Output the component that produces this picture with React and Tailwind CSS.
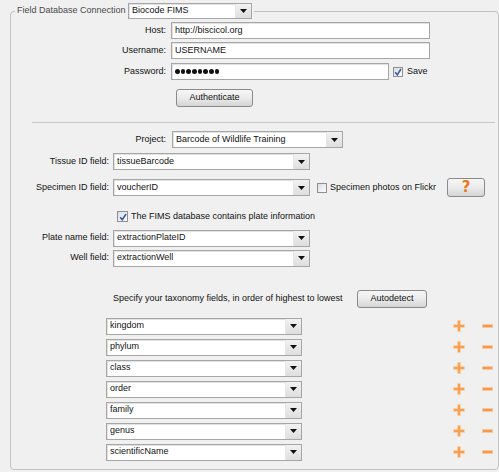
const TAXONOMY = ['kingdom', 'phylum', 'class', 'order', 'family', 'genus', 'scientificName']

function Arrow() {
  return (
    <svg width="7" height="4" viewBox="0 0 7 4">
      <polygon points="0,0 7,0 3.5,4" fill="#111" />
    </svg>
  )
}

function Combo({ value, className = '', h = 'h-[17px]' }) {
  return (
    <div className={`flex ${h} border border-[#a6a6a6] bg-white shadow-[inset_1px_1px_0_#e2e2e2] ${className}`}>
      <span className="flex-1 pl-[3px] flex items-center truncate">{value}</span>
      <span className="w-[16px] flex items-center justify-center bg-linear-to-b from-[#f2f2f2] to-[#dedede] border-l border-[#e6e6e6]">
        <Arrow />
      </span>
    </div>
  )
}

function Input({ className = '', children }) {
  return (
    <div className={`h-[17px] border border-[#a6a6a6] bg-white shadow-[inset_1px_1px_0_#e2e2e2] pl-[3px] flex items-center ${className}`}>
      {children}
    </div>
  )
}

function Check({ checked, size = 'w-[10px] h-[10px]' }) {
  return (
    <span className={`${size} shrink-0 border border-[#8e8f8f] bg-linear-to-br from-[#d8dde6] to-[#fdfdfd] flex items-center justify-center`}>
      {checked && (
        <svg width="8" height="8" viewBox="0 0 8 8">
          <path d="M1.2 4.2 L3.3 6.8 L7 1" fill="none" stroke="#3d5da8" strokeWidth="1.6" />
        </svg>
      )}
    </span>
  )
}

function Button({ className = '', children }) {
  return (
    <div className={`border border-[#8a8a8a] rounded-[3px] bg-linear-to-b from-[#f6f6f6] via-[#ebebeb] to-[#d4d4d4] flex items-center justify-center ${className}`}>
      {children}
    </div>
  )
}

function Plus() {
  return (
    <svg width="12" height="12" viewBox="0 0 12 12">
      <path d="M4.5 0.5 H7.5 V4.5 H11.5 V7.5 H7.5 V11.5 H4.5 V7.5 H0.5 V4.5 H4.5 Z" fill="#f5a053" stroke="#fbd0a8" strokeWidth="1" />
    </svg>
  )
}

function Minus() {
  return (
    <svg width="11" height="4" viewBox="0 0 11 4">
      <rect x="0.5" y="0.5" width="10" height="3" fill="#f39a4e" stroke="#f9c79c" strokeWidth="1" />
    </svg>
  )
}

export default function App() {
  return (
    <div className="w-[499px] h-[472px] bg-[#f0f0f0] text-[#111] text-[9px] pt-[3px]" style={{ fontFamily: "'Liberation Sans', Arial, sans-serif" }}>
      <fieldset className="ml-[10px] w-[489px] h-[467px] border border-[#c2c2c2] rounded-[4px]">
        <legend className="ml-[4px] px-[2px] flex items-center">
          <span className="w-[111px] text-[#4a4a4a]">Field Database Connection</span>
          <Combo value="Biocode FIMS" className="w-[124px]" h="h-[16px]" />
        </legend>

        <div className="flex flex-col">
          <div className="mt-[3px] flex items-center">
            <span className="w-[155px] text-right">Host:</span>
            <Input className="ml-[5px] w-[259px]">http://biscicol.org</Input>
          </div>
          <div className="mt-[3px] flex items-center">
            <span className="w-[155px] text-right">Username:</span>
            <Input className="ml-[5px] w-[259px]">USERNAME</Input>
          </div>
          <div className="mt-[4px] flex items-center">
            <span className="w-[155px] text-right">Password:</span>
            <Input className="ml-[5px] w-[218px] gap-[1.2px]">
              {Array.from({ length: 8 }).map((_, i) => (
                <span key={i} className="w-[4.5px] h-[4.5px] rounded-full bg-[#111]" />
              ))}
            </Input>
            <span className="ml-[4px]"><Check checked /></span>
            <span className="ml-[4px]">Save</span>
          </div>

          <Button className="mt-[9px] ml-[165px] w-[77px] h-[18px]">Authenticate</Button>

          <div className="mt-[15px] ml-[21px] w-[463px] h-px bg-[#c8c8c8]" />

          <div className="mt-[8px] flex items-center">
            <span className="w-[155px] text-right">Project:</span>
            <Combo value="Barcode of Wildlife Training" className="ml-[6px] w-[171px]" />
          </div>
          <div className="mt-[5px] flex items-center">
            <span className="w-[98px] text-right">Tissue ID field:</span>
            <Combo value="tissueBarcode" className="ml-[4px] w-[197px]" />
          </div>
          <div className="mt-[8px] flex items-center h-[19px]">
            <span className="w-[98px] text-right">Specimen ID field:</span>
            <Combo value="voucherID" className="ml-[4px] w-[197px]" />
            <span className="ml-[7px] w-[130px] flex items-center">
              <Check />
              <span className="ml-[3px]">Specimen photos on Flickr</span>
            </span>
            <Button className="w-[38px] h-[19px]">
              <span className="text-[#e8781c] text-[15px] font-bold leading-none" style={{ fontFamily: "'DejaVu Sans', sans-serif" }}>?</span>
            </Button>
          </div>
          <div className="mt-[13px] ml-[106px] flex items-center">
            <Check checked size="w-[11px] h-[11px]" />
            <span className="ml-[3px]">The FIMS database contains plate information</span>
          </div>
          <div className="mt-[6px] flex items-center">
            <span className="w-[98px] text-right">Plate name field:</span>
            <Combo value="extractionPlateID" className="ml-[4px] w-[197px]" />
          </div>
          <div className="mt-[3px] flex items-center">
            <span className="w-[98px] text-right">Well field:</span>
            <Combo value="extractionWell" className="ml-[4px] w-[197px]" />
          </div>

          <div className="mt-[23px] ml-[102px] flex items-center">
            <span className="w-[244px]">Specify your taxonomy fields, in order of highest to lowest</span>
            <Button className="w-[70px] h-[18px]">Autodetect</Button>
          </div>

          <div className="mt-[10px] flex flex-col gap-[4px]">
            {TAXONOMY.map((t) => (
              <div key={t} className="flex items-center">
                <Combo value={t} className="ml-[95px] w-[196px]" />
                <span className="ml-[151px]"><Plus /></span>
                <span className="ml-[17px]"><Minus /></span>
              </div>
            ))}
          </div>
        </div>
      </fieldset>
    </div>
  )
}
